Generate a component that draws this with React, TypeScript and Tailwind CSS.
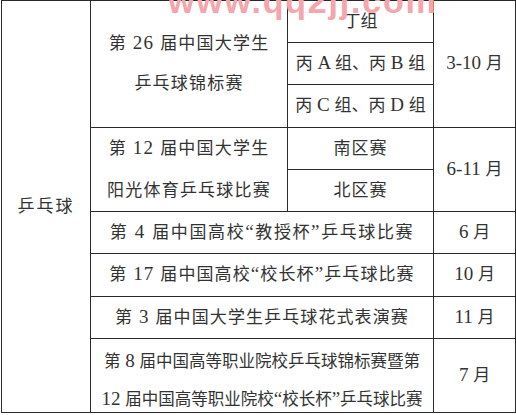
import React from "react";

const cell = "bg-white flex items-center justify-center text-center";

function L({ children }: { children: React.ReactNode }) {
  return <span className="text-[19px] leading-none">{children}</span>;
}

export default function App() {
  return (
    <div
      className="relative w-[516px] h-[415px] bg-white overflow-hidden text-[#333] text-[17px]"
      style={{ fontFamily: '"Liberation Serif", "Noto Sans CJK SC", serif' }}
    >
      <div className="ml-px w-[515px] grid grid-cols-[88px_196px_145px_81px] grid-rows-[41px_41px_42px_41px_41px_41px_42px_41px_73px] gap-px p-px bg-[#2a2a2a]">
        <div className={`${cell} col-start-1 row-start-1 row-span-9 tracking-[2px]`}>
          <div>乒乓球</div>
        </div>

        <div className={`${cell} col-start-2 row-start-1 row-span-3 flex-col leading-[40px] tracking-[1.2px]`}>
          <div>第<L> 26 </L>届中国大学生</div>
          <div>乒乓球锦标赛</div>
        </div>
        <div className={`${cell} col-start-3 row-start-1`}>
          <div>丁组</div>
        </div>
        <div className={`${cell} col-start-3 row-start-2`}>
          <div>丙<L> A </L>组、丙<L> B </L>组</div>
        </div>
        <div className={`${cell} col-start-3 row-start-3`}>
          <div>丙<L> C </L>组、丙<L> D </L>组</div>
        </div>
        <div className={`${cell} col-start-4 row-start-1 row-span-3`}>
          <div><L>3-10 </L>月</div>
        </div>

        <div className={`${cell} col-start-2 row-start-4 row-span-2 flex-col leading-[42px] tracking-[1.2px]`}>
          <div>第<L> 12 </L>届中国大学生</div>
          <div>阳光体育乒乓球比赛</div>
        </div>
        <div className={`${cell} col-start-3 row-start-4 tracking-[1px]`}>
          <div>南区赛</div>
        </div>
        <div className={`${cell} col-start-3 row-start-5 tracking-[1px]`}>
          <div>北区赛</div>
        </div>
        <div className={`${cell} col-start-4 row-start-4 row-span-2`}>
          <div><L>6-11 </L>月</div>
        </div>

        <div className={`${cell} col-start-2 col-span-2 row-start-6 tracking-[1.6px]`}>
          <div>第<L> 4 </L>届中国高校<L>“</L>教授杯<L>”</L>乒乓球比赛</div>
        </div>
        <div className={`${cell} col-start-4 row-start-6`}>
          <div><L>6 </L>月</div>
        </div>

        <div className={`${cell} col-start-2 col-span-2 row-start-7 tracking-[1.1px]`}>
          <div>第<L> 17 </L>届中国高校<L>“</L>校长杯<L>”</L>乒乓球比赛</div>
        </div>
        <div className={`${cell} col-start-4 row-start-7`}>
          <div><L>10 </L>月</div>
        </div>

        <div className={`${cell} col-start-2 col-span-2 row-start-8 tracking-[1.1px]`}>
          <div>第<L> 3 </L>届中国大学生乒乓球花式表演赛</div>
        </div>
        <div className={`${cell} col-start-4 row-start-8`}>
          <div><L>11 </L>月</div>
        </div>

        <div className="bg-white flex flex-col items-center justify-end text-center col-start-2 col-span-2 row-start-9 gap-[14px] text-[16.5px]">
          <div className="leading-[24px]">第<L> 8 </L>届中国高等职业院校乒乓球锦标赛暨第</div>
          <div className="leading-[24px]"><L>12 </L>届中国高等职业院校<L>“</L>校长杯<L>”</L>乒乓球比赛</div>
        </div>
        <div className={`${cell} col-start-4 row-start-9`}>
          <div><L>7 </L>月</div>
        </div>
      </div>

      <div
        className="absolute left-[168px] top-[-16px] text-[34px] leading-none font-bold text-[#f4a6ad] tracking-[1.8px] whitespace-nowrap"
        style={{ fontFamily: '"Liberation Sans", sans-serif' }}
      >
        www.qq2jj.com
      </div>
    </div>
  );
}
